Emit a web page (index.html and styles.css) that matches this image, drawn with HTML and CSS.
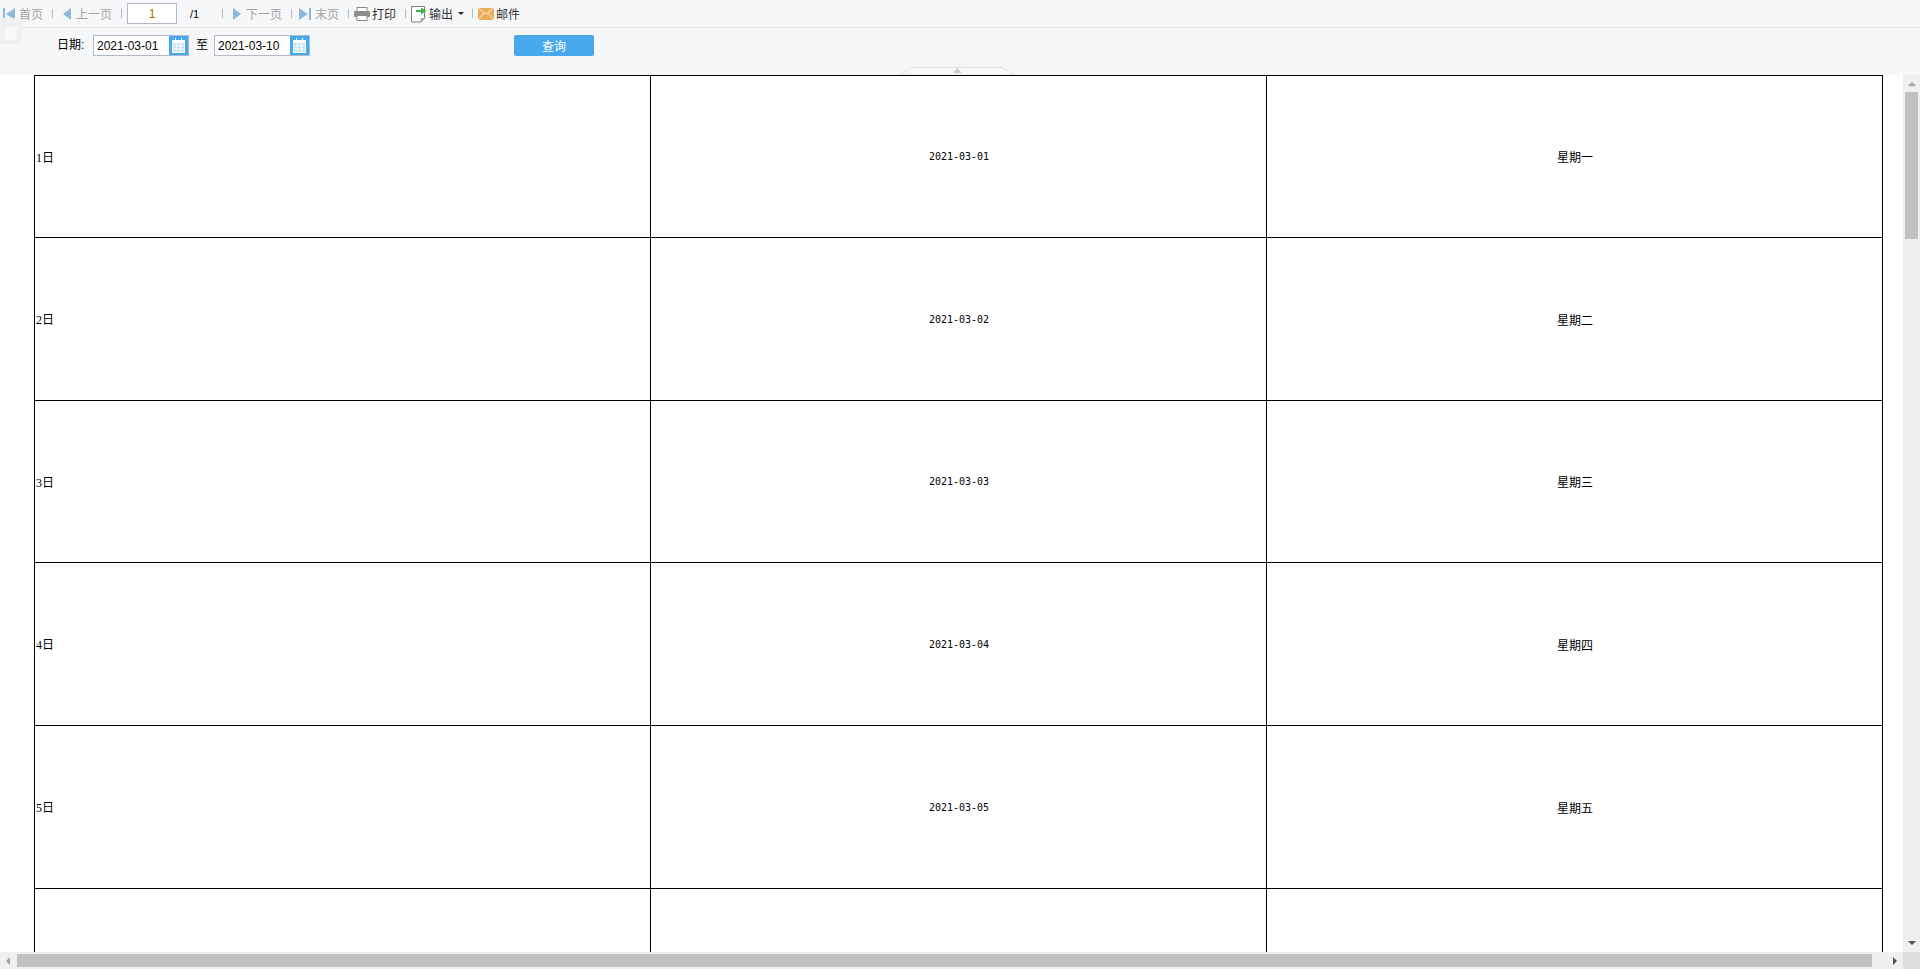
FILE: index.html
```html
<!DOCTYPE html>
<html lang="zh-CN">
<head>
  <meta charset="UTF-8" />
  <title>报表预览</title>
  <link rel="stylesheet" href="styles.css">
</head>
<body>
  <div class="page">
    <div class="toolbar">
      <span class="tool off"><svg class="ico" width="13" height="14" viewBox="0 0 13 14"><rect x="0" y="1" width="2" height="12" fill="#8fb9dc"/><path d="M12 1v12L3 7z" fill="#8fb9dc"/></svg>首页</span>
      <i class="sep"></i>
      <span class="tool off"><svg class="ico" width="10" height="14" viewBox="0 0 10 14"><path d="M9 1v12L1 7z" fill="#8fb9dc"/></svg>上一页</span>
      <i class="sep"></i>
      <input class="page-num" value="1">
      <span class="page-total">/1</span>
      <i class="sep"></i>
      <span class="tool off"><svg class="ico" width="10" height="14" viewBox="0 0 10 14"><path d="M1 1v12l8-6z" fill="#8fb9dc"/></svg>下一页</span>
      <i class="sep tight-last"></i>
      <span class="tool off"><svg class="ico" width="13" height="14" viewBox="0 0 13 14"><path d="M0 1v12l9-6z" fill="#8fb9dc"/><rect x="10" y="1" width="2" height="12" fill="#8fb9dc"/></svg>末页</span>
      <i class="sep tight"></i>
      <span class="tool"><svg class="ico" width="16" height="14" viewBox="0 0 16 14"><rect x="3" y="0.500" width="10" height="4" fill="#fff" stroke="#8d8d8d"/><rect x="0" y="4" width="16" height="6" rx="1" fill="#8d8d8d"/><rect x="3" y="8.500" width="10" height="5" fill="#fff" stroke="#8d8d8d"/></svg>打印</span>
      <i class="sep tight"></i>
      <span class="tool"><svg class="ico" width="16" height="18" viewBox="0 0 16 18"><path d="M0.500 1.500h13v12l-3.500 3.500h-9.500z" fill="#fff" stroke="#808080"/><path d="M10 13.500v3.500l3.500-3.500z" fill="#ccc" stroke="#808080" stroke-width="0.6"/><path d="M5 5h5V2.500L15.500 6 10 9.500V7H5z" fill="#3cb24a"/></svg>输出<b class="caret"></b></span>
      <i class="sep tight"></i>
      <span class="tool"><svg class="ico" width="16" height="12" viewBox="0 0 16 12"><rect width="16" height="12" fill="#ebae58"/><path d="M0 0l8 6 8-6M0 12l6-7M16 12l-6-7" fill="none" stroke="#fff" stroke-width="0.8"/></svg>邮件</span>
    </div>

    <form class="params">
      <label class="param-label">日期:</label>
      <span class="date-box">
        <input class="date-input" value="2021-03-01">
        <span class="date-btn"><svg width="13" height="15" viewBox="0 0 13 15"><path d="M0 2h13v13H0z" fill="#fff"/><path d="M1 5h11v9H1z" fill="#bfe0f8"/><path d="M1 8h11M1 11h11M4.500 5v9M8.500 5v9" stroke="#fff" fill="none"/><path d="M3 0h1v3H3zM9 0h1v3H9z" fill="#fff"/></svg></span>
      </span>
      <span class="param-to">至</span>
      <span class="date-box">
        <input class="date-input" value="2021-03-10">
        <span class="date-btn"><svg width="13" height="15" viewBox="0 0 13 15"><path d="M0 2h13v13H0z" fill="#fff"/><path d="M1 5h11v9H1z" fill="#bfe0f8"/><path d="M1 8h11M1 11h11M4.500 5v9M8.500 5v9" stroke="#fff" fill="none"/><path d="M3 0h1v3H3zM9 0h1v3H9z" fill="#fff"/></svg></span>
      </span>
      <button class="query-btn" type="button">查询</button>
    </form>

    <svg class="collapse-tab" width="114" height="8" viewBox="0 0 114 8"><path d="M0 8L12 0.500H102L114 8z" fill="#f9f9fa" stroke="#e0e0e0"/><path d="M53 6l4.500-5L62 6z" fill="#cccccc"/></svg>
    <div class="ghost-btn"></div>

    <div class="middle">
      <div class="report">
        <table class="grid">
          <tr><td class="day">1日</td><td class="date">2021-03-01</td><td class="week">星期一</td></tr>
          <tr><td class="day">2日</td><td class="date">2021-03-02</td><td class="week">星期二</td></tr>
          <tr><td class="day">3日</td><td class="date">2021-03-03</td><td class="week">星期三</td></tr>
          <tr><td class="day">4日</td><td class="date">2021-03-04</td><td class="week">星期四</td></tr>
          <tr><td class="day">5日</td><td class="date">2021-03-05</td><td class="week">星期五</td></tr>
          <tr><td></td><td></td><td></td></tr>
        </table>
      </div>
      <div class="vbar">
        <span class="arrow up"></span>
        <span class="vthumb"></span>
        <span class="arrow down"></span>
      </div>
    </div>

    <div class="hbar">
      <span class="arrow left"></span>
      <span class="hthumb"></span>
      <span class="arrow right"></span>
      <span class="corner"></span>
    </div>
  </div>
</body>
</html>
```

FILE: styles.css
```css
html, body {
  margin: 0;
  height: 100%;
  overflow: hidden;
}

body {
  font-family: "Liberation Sans", "Noto Sans CJK SC", sans-serif;
  font-size: 12px;
  color: #000;
  background: #fff;
}

.page {
  position: relative;
  height: 969px;
  display: flex;
  flex-direction: column;
}

/* toolbar */
.toolbar {
  height: 28px;
  flex: none;
  display: flex;
  align-items: center;
  padding-left: 3px;
  background: #f6f7f9;
  border-bottom: 1px solid #e4e6e9;
  box-sizing: border-box;
}

.tool {
  display: flex;
  align-items: center;
  color: #333;
  white-space: nowrap;
}

.tool.off { color: #a3a3a3; }

.ico { margin-right: 2px; flex: none; }

.tool.off .ico { margin-right: 3px; }

.tool.off .ico[width="10"] { margin-right: 4px; }

.sep {
  width: 1px;
  height: 9px;
  margin: 0 9px;
  background: #b9b9b9;
  flex: none;
}

.sep.tight { margin-right: 5px; }

.sep.tight-last { margin-right: 7px; }

.page-num {
  width: 50px;
  height: 21px;
  padding: 0;
  box-sizing: border-box;
  margin: 0 0 0 -4px;
  border: 1px solid #b2b8cc;
  text-align: center;
  font: 12px "Liberation Sans", sans-serif;
  color: #b06a00;
  background: #fff;
}

.page-total {
  width: 23px;
  margin-left: 13px;
  font-size: 11px;
}

.caret {
  width: 0;
  height: 0;
  margin: 0 -1px 0 5px;
  border: 3px solid transparent;
  border-top: 3px solid #222;
  border-bottom: 0;
}

/* parameter form */
.params {
  height: 47px;
  flex: none;
  margin: 0;
  padding: 7px 0 0 57px;
  display: flex;
  align-items: flex-start;
  box-sizing: border-box;
  background: #f6f7f9;
}

.param-label {
  width: 36px;
  line-height: 21px;
}

.param-to {
  margin: 0 6px 0 7px;
  line-height: 21px;
}

.date-box {
  width: 96px;
  height: 21px;
  display: flex;
  box-sizing: border-box;
  border: 1px solid #b2b8cc;
  background: #fff;
}

.date-input {
  width: 75px;
  min-width: 0;
  padding: 0 0 0 3px;
  box-sizing: border-box;
  border: 0;
  font: 12px "Liberation Sans", sans-serif;
  color: #000;
}

.date-btn {
  width: 19px;
  flex: none;
  background: #46a9ec;
  display: flex;
  align-items: center;
  justify-content: center;
}

.query-btn {
  width: 80px;
  height: 21px;
  margin-left: 204px;
  padding: 0;
  border: 0;
  border-radius: 2px;
  background: #46a9ec;
  color: #fff;
  font: 12px "Liberation Sans", "Noto Sans CJK SC", sans-serif;
}

/* overlays on the header */
.collapse-tab {
  position: absolute;
  left: 900px;
  top: 67px;
  z-index: 2;
}

.ghost-btn {
  position: absolute;
  left: 0;
  top: 18px;
  width: 22px;
  height: 26px;
  border-radius: 0 4px 4px 0;
  background: #eff0f2;
  z-index: 2;
}

.ghost-btn::after {
  content: "";
  position: absolute;
  left: 5px;
  top: 9px;
  width: 12px;
  height: 13px;
  background: #f8f8fa;
}

/* report */
.middle {
  flex: 1;
  min-height: 0;
  display: flex;
}

.report {
  flex: 1;
  min-width: 0;
  overflow: hidden;
  padding-left: 34px;
}

.grid {
  width: 1849px;
  table-layout: fixed;
  border-collapse: collapse;
  position: relative;
  z-index: 3;
}

.grid td {
  height: 163px;
  padding: 0 0 0 1px;
  border: 1px solid #000;
  box-sizing: border-box;
  overflow: hidden;
}

.grid tr:nth-child(1) td,
.grid tr:nth-child(3) td { height: 162px; }

.day {
  font-family: "Liberation Serif", "Noto Sans CJK SC", serif;
  font-size: 12px;
}

.date {
  text-align: center;
  font-family: "DejaVu Sans Mono", monospace;
  font-size: 10px;
}

.week {
  text-align: center;
  font-family: "Noto Sans CJK SC", sans-serif;
  font-size: 12px;
}

/* scrollbars */
.vbar {
  width: 17px;
  flex: none;
  margin-left: auto;
  background: #f0f0f0;
  display: flex;
  flex-direction: column;
  align-items: center;
}

.vthumb {
  width: 13px;
  height: 147px;
  background: #c1c1c1;
}

.hbar {
  height: 17px;
  flex: none;
  display: flex;
  align-items: center;
  background: #f0f0f0;
}

.hthumb {
  width: 1855px;
  height: 13px;
  background: #c1c1c1;
}

.corner {
  width: 17px;
  height: 17px;
  margin-left: auto;
  background: #dcdcdc;
}

.arrow {
  width: 0;
  height: 0;
  flex: none;
  border: 4px solid transparent;
}

.arrow.up {
  margin: 7px 0 6px;
  border-top: 0;
  border-bottom: 4px solid #a3a3a3;
}

.arrow.down {
  margin: auto 0 7px;
  border-bottom: 0;
  border-top: 4px solid #505050;
}

.arrow.left {
  margin: 0 7px 0 6px;
  border-left: 0;
  border-right: 4px solid #a3a3a3;
}

.arrow.right {
  margin: 0 0 0 21px;
  border-right: 0;
  border-left: 4px solid #505050;
}
```
